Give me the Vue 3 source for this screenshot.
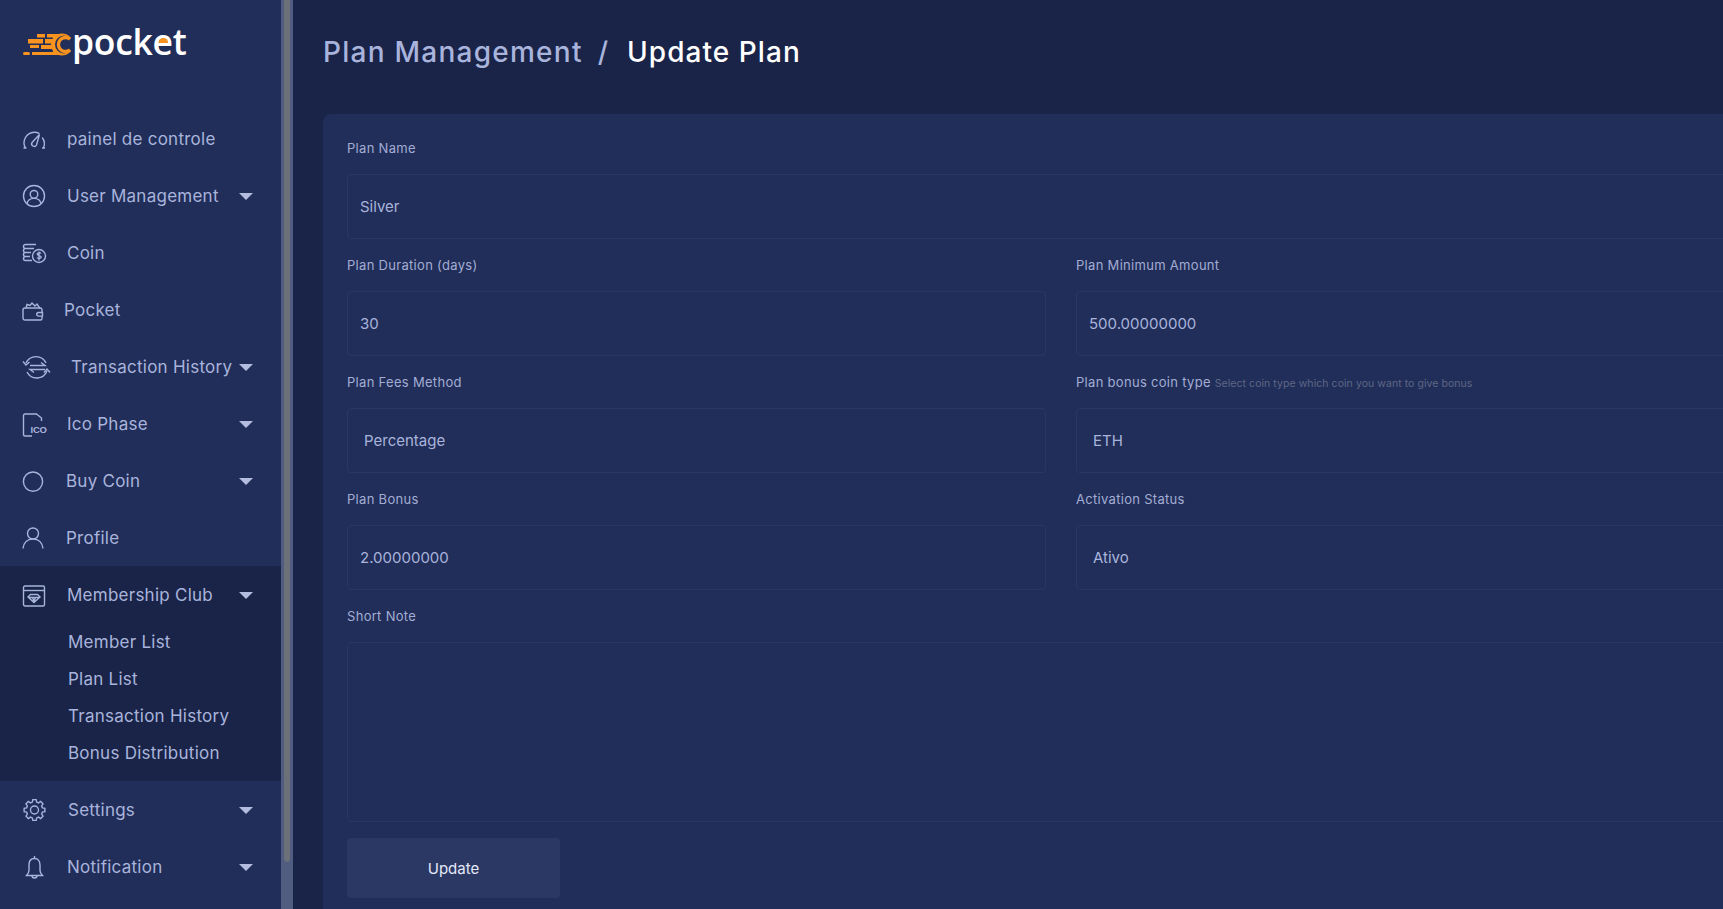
<template>
  <div class="page">
    <aside class="sidebar">
      <div class="logo">
        <svg class="logo-mark" width="48" height="24" viewBox="0 0 48 24">
          <g fill="#f7931e">
            <rect x="14" y="1" width="8" height="3.5" />
            <rect x="24" y="1" width="13" height="3.5" />
            <rect x="5" y="6" width="15" height="4.5" />
            <rect x="22" y="6" width="12" height="4.5" />
            <rect x="7" y="12" width="9" height="3" />
            <rect x="18" y="12" width="16" height="4" />
            <rect x="0" y="19" width="7" height="3" rx="1.5" />
            <rect x="9" y="19" width="28" height="3" />
            <rect x="30" y="2" width="6" height="19" />
          </g>
          <circle cx="39" cy="11.5" r="11" fill="#f7931e" />
          <circle cx="41" cy="11.5" r="9" fill="#212e59" />
          <path d="M47 6.2a7 7 0 1 0 0 10.6" fill="none" stroke="#f7931e" stroke-width="3.4" />
        </svg>
        <span class="logo-text">pock<span class="logo-e">e<i></i></span>t</span>
      </div>
      <nav class="menu">
        <div v-for="item in menu" :key="item.label" class="group" :class="{ open: item.children }">
          <a class="item">
            <svg
              class="icon"
              :style="{ marginRight: item.gap + 'px' }"
              width="24"
              height="24"
              viewBox="0 0 24 24"
            >
              <path v-for="d in icons[item.icon]" :key="d" :d="d" />
              <text v-if="item.icon === 'ico'" x="8.5" y="20.5" class="ico-text">ICO</text>
            </svg>
            <span>{{ item.label }}</span>
            <i v-if="item.caret" class="caret"></i>
          </a>
          <ul v-if="item.children" class="submenu">
            <li v-for="child in item.children" :key="child">{{ child }}</li>
          </ul>
        </div>
      </nav>
    </aside>

    <div class="scrollbar"><div class="thumb"></div></div>

    <main class="main">
      <h1 class="title">
        <span class="crumb">Plan Management</span>
        <span class="slash">/</span>
        <span>Update Plan</span>
      </h1>
      <form class="card" @submit.prevent>
        <div class="field wide">
          <label>Plan Name</label>
          <div class="control">Silver</div>
        </div>
        <div v-for="f in fields" :key="f.label" class="field">
          <label>{{ f.label }} <small v-if="f.hint">{{ f.hint }}</small></label>
          <div class="control" :class="{ select: f.select }">{{ f.value }}</div>
        </div>
        <div class="field wide">
          <label>Short Note</label>
          <div class="control note"></div>
        </div>
        <button class="update" type="button">Update</button>
      </form>
    </main>
  </div>
</template>

<script setup>
// gear outline, 8 teeth round the centre
const gearPath = (cx, cy, outer, inner) => {
  const pts = []
  for (let i = 0; i < 8; i++) {
    const a = (i * Math.PI) / 4
    const steps = [
      [-0.27, inner],
      [-0.16, outer],
      [0.16, outer],
      [0.27, inner]
    ]
    for (const [off, r] of steps) {
      const x = cx + r * Math.cos(a + off)
      const y = cy + r * Math.sin(a + off)
      pts.push(x.toFixed(2) + ' ' + y.toFixed(2))
    }
  }
  return 'M' + pts.join('L') + 'z'
}

const icons = {
  gauge: [
    'M3.5 21A10.500 10.500 0 0 1 12 5.200A10.500 10.500 0 0 1 17.500 6.600',
    'M20.200 10.500A10.500 10.500 0 0 1 21.500 21',
    'M1.500 21h3M20 21h3',
    'M10 15.500L17.500 7.500 14.500 18a2.500 2.500 0 0 1-4.500-2.500z'
  ],
  user: [
    'M12 1.500a10.500 10.500 0 1 0 0 21a10.500 10.500 0 1 0 0-21z',
    'M12 6.500a3.800 3.800 0 1 0 0 7.600a3.800 3.800 0 1 0 0-7.600z',
    'M5 20c.5-3.500 3-5.600 7-5.600s6.500 2.100 7 5.600'
  ],
  coin: [
    'M14 3.500H3.500a1.500 1.500 0 0 0 0 4H12M3.500 7.500a1.500 1.500 0 0 0 0 4H9M3.500 11.500a1.500 1.500 0 0 0 0 4H8M3.500 15.500a1.500 1.500 0 0 0 0 4H10',
    'M17 8.500a6.500 6.500 0 1 0 0 13a6.500 6.500 0 1 0 0-13z',
    'M19 12.500c-.5-.8-3.800-1.200-3.800.6 0 1.900 4 1 4 3 0 1.800-3.400 1.500-4.200.5M17 10.500v9'
  ],
  wallet: [
    'M3 10h15a2 2 0 0 1 2 2v2.500M20 18v2.500a1.500 1.500 0 0 1-1.500 1.500H3a2 2 0 0 1-2-2V12a2 2 0 0 1 2-2',
    'M4 10l1-3.500 3 1 2-2.500 3 3 2-2 3 4.500',
    'M20.500 14.500h-4a1.800 1.800 0 0 0 0 3.600h4z'
  ],
  exchange: [
    'M4 8A11 11 0 0 1 24 8',
    'M25 16A11 11 0 0 1 5 17',
    'M1 6.500l3 3.500 3.500-3M22 17.500l3-3.500 3 3.500',
    'M8 10.500h15l-4-3M23 14.500H8l4 3'
  ],
  ico: ['M15 2H3a1.500 1.500 0 0 0-1.500 1.500v19A1.500 1.500 0 0 0 3 24h7', 'M14.500 2l5 4v3'],
  circle: ['M11 3a9.600 9.600 0 1 0 0 19.200a9.600 9.600 0 1 0 0-19.200z'],
  profile: [
    'M11 2a5.500 5.500 0 1 0 0 11a5.500 5.500 0 1 0 0-11z',
    'M1 22.500c.6-6 4.500-9.500 10-9.500s9.400 3.500 10 9.500'
  ],
  club: [
    'M3 3h18a1.500 1.500 0 0 1 1.500 1.500v17A1.500 1.500 0 0 1 21 23H3a1.500 1.500 0 0 1-1.500-1.500v-17A1.500 1.500 0 0 1 3 3z',
    'M1.500 7.500h21',
    'M8.500 11.500h7l2.500 2.500-6 5.500-6-5.500zM6.500 14.500h11M10.500 14.500l1.500 4 1.500-4'
  ],
  gear: [gearPath(12.5, 12, 10.5, 8.2), 'M12.500 8a4 4 0 1 0 0 8a4 4 0 1 0 0-8z'],
  bell: [
    'M12.500 3.500c-3.700 0-5.500 3-5.500 6.500v5.500c0 2-1.500 3.800-2.500 5h16c-1-1.200-2.500-3-2.500-5V10c0-3.500-1.800-6.500-5.500-6.500z',
    'M12.500 1v2.500M10 20.500a2.500 2.500 0 0 0 5 0'
  ]
}

const menu = [
  { label: 'painel de controle', icon: 'gauge', gap: 21 },
  { label: 'User Management', icon: 'user', caret: true, gap: 21 },
  { label: 'Coin', icon: 'coin', gap: 21 },
  { label: 'Pocket', icon: 'wallet', gap: 18 },
  { label: 'Transaction History', icon: 'exchange', caret: true, gap: 25 },
  { label: 'Ico Phase', icon: 'ico', caret: true, gap: 21 },
  { label: 'Buy Coin', icon: 'circle', caret: true, gap: 20 },
  { label: 'Profile', icon: 'profile', gap: 20 },
  {
    label: 'Membership Club',
    icon: 'club',
    caret: true,
    gap: 21,
    children: ['Member List', 'Plan List', 'Transaction History', 'Bonus Distribution']
  },
  { label: 'Settings', icon: 'gear', caret: true, gap: 22 },
  { label: 'Notification', icon: 'bell', caret: true, gap: 21 }
]

const fields = [
  { label: 'Plan Duration (days)', value: '30' },
  { label: 'Plan Minimum Amount', value: '500.00000000' },
  { label: 'Plan Fees Method', value: 'Percentage', select: true },
  {
    label: 'Plan bonus coin type',
    hint: 'Select coin type which coin you want to give bonus',
    value: 'ETH',
    select: true
  },
  { label: 'Plan Bonus', value: '2.00000000' },
  { label: 'Activation Status', value: 'Ativo', select: true }
]
</script>

<style>
html,
body {
  margin: 0;
  height: 100%;
  overflow: hidden;
}
</style>

<style scoped>
.page {
  display: flex;
  width: 1723px;
  height: 909px;
  overflow: hidden;
  background: #1a2448;
  font-family: Inter, "Noto Sans", sans-serif;
  color: #a9b4dc;
}

.sidebar {
  width: 281px;
  flex-shrink: 0;
  background: #212e59;
  overflow: hidden;
}

.logo {
  position: relative;
  display: flex;
  align-items: flex-start;
  height: 110px;
  padding: 33px 0 0 23px;
  box-sizing: border-box;
}

.logo-text {
  margin: -17px 0 0 1px;
  font-family: "Open Sans", sans-serif;
  font-size: 35.5px;
  font-weight: 600;
  line-height: 50px;
  letter-spacing: -0.3px;
  color: #fff;
}

.logo-e {
  position: relative;
}

.logo-e i {
  position: absolute;
  left: 6px;
  top: 21px;
  width: 9px;
  height: 5px;
  border-radius: 5px 5px 0 0;
  background: #f7931e;
}

.menu {
  display: flex;
  flex-direction: column;
}

.group.open {
  background: #1a2448;
  padding-bottom: 9px;
}

.item {
  display: flex;
  align-items: center;
  height: 57px;
  padding: 0 28px 0 22px;
  font-size: 17px;
  letter-spacing: 0.25px;
  box-sizing: border-box;
}

.icon {
  flex-shrink: 0;
  overflow: visible;
  fill: none;
  stroke: #a9b4dc;
  stroke-width: 1.4;
}

.ico-text {
  font-family: "Liberation Sans", sans-serif;
  font-size: 9.5px;
  font-weight: 700;
  letter-spacing: -0.2px;
  fill: #a9b4dc;
  stroke: none;
}

.caret {
  margin: 1px 0 0 auto;
  width: 0;
  height: 0;
  border-left: 7px solid transparent;
  border-right: 7px solid transparent;
  border-top: 7px solid #b4bde0;
}

.submenu {
  list-style: none;
  margin: 1px 0 0;
  padding: 0 0 0 68px;
  font-size: 17px;
  letter-spacing: 0.25px;
}

.submenu li {
  height: 37px;
  line-height: 37px;
}

.scrollbar {
  width: 12px;
  flex-shrink: 0;
  padding: 0 3px;
  box-sizing: border-box;
  background: #505c80;
}

.thumb {
  height: 862px;
  border-radius: 0 0 3px 3px;
  background: #6c7079;
}

.main {
  flex: 1;
  min-width: 0;
  padding: 0 0 0 30px;
  overflow: hidden;
}

.title {
  display: flex;
  gap: 18px;
  margin: 0;
  height: 114px;
  padding-top: 33px;
  box-sizing: border-box;
  font-size: 28px;
  font-weight: 500;
  line-height: 38px;
  letter-spacing: 1.05px;
  color: #fff;
  white-space: nowrap;
}

.crumb,
.slash {
  color: #a9b4dc;
}

.crumb {
  letter-spacing: 1.25px;
}

.slash {
  margin-left: -3px;
}

.card {
  display: grid;
  grid-template-columns: 699px 699px;
  column-gap: 30px;
  width: 1500px;
  padding: 24px;
  box-sizing: border-box;
  border-radius: 8px;
  background: #212e59;
}

.field {
  display: flex;
  flex-direction: column;
}

.wide {
  grid-column: 1 / -1;
}

label {
  height: 36px;
  margin-bottom: 0;
  font-size: 13px;
  line-height: 20px;
  letter-spacing: 0.3px;
  color: #a3add4;
  white-space: nowrap;
}

small {
  font-size: 10.5px;
  letter-spacing: 0.06px;
  color: #5f6785;
}

.control {
  height: 65px;
  margin-bottom: 16px;
  padding: 0 12px;
  box-sizing: border-box;
  border: 1px solid #2a3762;
  border-radius: 4px;
  font-size: 15px;
  line-height: 63px;
  color: #a9b4dc;
}

.select {
  padding-left: 16px;
}

.note {
  height: 180px;
}

.update {
  width: 213px;
  height: 60px;
  padding-top: 2px;
  border: none;
  border-radius: 4px;
  background: #2b3863;
  color: #e4e9fa;
  font-family: inherit;
  font-size: 15px;
}
</style>
